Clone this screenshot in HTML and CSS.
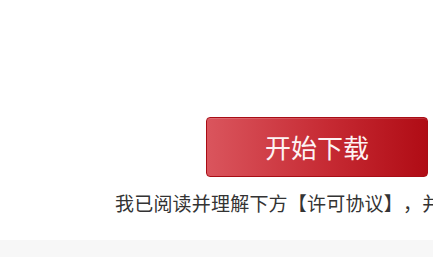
FILE: index.html
```html
<!DOCTYPE html>
<html lang="zh-CN">
<head>
<meta charset="UTF-8">
<title>开始下载</title>
<link rel="stylesheet" href="styles.css">
</head>
<body>

<div class="download-area">
  <button type="button" class="btn-download">开始下载</button>
  <p class="agree">我已阅读并理解下方【许可协议】，并</p>
</div>

<div class="footer-band"></div>

</body>
</html>
```

FILE: styles.css
```css
body {
    margin: 0;
    font-family: "Noto Sans CJK SC", "Noto Sans", sans-serif;
    background: #fff;
    overflow: hidden;
}
.download-area {
    box-sizing: border-box;
    height: 240px;
    padding-top: 117px;
    padding-left: 115px;
    white-space: nowrap;
}
.btn-download {
    display: block;
    margin-left: 91px;
    width: 222px;
    height: 60px;
    padding: 0;
    border: 1px solid #a80d15;
    border-radius: 4px;
    background: linear-gradient(to right, #da555d, #c62a33 55%, #b00c15);
    box-shadow: inset 0 1px 0 rgba(255, 255, 255, 0.15);
    color: #fdf3f4;
    font-family: inherit;
    font-size: 26px;
    line-height: 54px;
    text-align: center;
    cursor: pointer;
}
.agree {
    margin: 13px 0 0;
    font-size: 19px;
    letter-spacing: 0.2px;
    line-height: 26px;
    color: #333;
    text-spacing-trim: space-all;
}
.footer-band {
    height: 17px;
    background: #f7f7f7;
}
```
